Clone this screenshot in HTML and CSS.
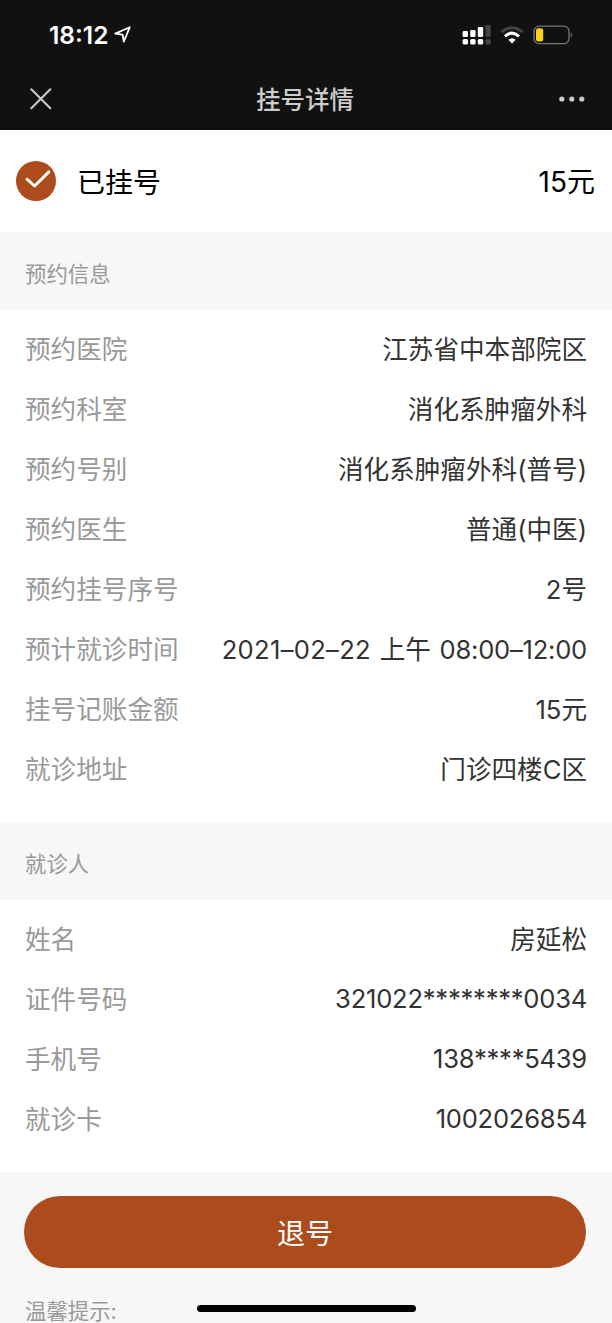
FILE: index.html
```html
<!DOCTYPE html>
<html lang="zh-CN">

<head>
	<meta charset="utf-8">
	<title>挂号详情</title>
	<link rel="stylesheet" href="styles.css">
</head>

<body>
	<header>
		<div class="statusbar">
			<span class="time">18:12</span>
			<svg class="location" width="18" height="18" viewBox="0 0 18 18">
				<path d="M1.2 7.6 L15.8 1.2 L9.8 15.6 L8.6 8.6 Z" />
			</svg>
			<svg class="signal" width="30" height="20" viewBox="0 0 30 20">
				<g fill="#fff">
					<rect x="1.6" y="6" width="5.4" height="6" rx="1.3" />
					<rect x="9.2" y="5" width="5.4" height="7" rx="1.3" />
					<rect x="16.8" y="2" width="5.4" height="10" rx="1.3" />
					<rect x="1.6" y="14" width="5.4" height="5.6" rx="1.6" />
					<rect x="9.2" y="14" width="5.4" height="5.6" rx="1.6" />
					<rect x="16.8" y="14" width="5.4" height="5.6" rx="1.6" />
				</g>
				<g fill="#444">
					<rect x="24.5" y="0" width="5.2" height="12" rx="1.3" />
					<rect x="24.5" y="14" width="5.2" height="5.6" rx="1.6" />
				</g>
			</svg>
			<svg class="wifi" width="24" height="20" viewBox="0 0 24 20">
				<path d="M1.4 7.2 Q12 -1.8 22.6 7.2" stroke="#444" />
				<path d="M5 11.3 Q12 4.9 19 11.3" stroke="#fff" />
				<path d="M12 18.6 L8.4 14.8 Q12 11.8 15.6 14.8 Z" fill="#fff" />
			</svg>
			<svg class="battery" width="40" height="20" viewBox="0 0 40 20">
				<rect x="1" y="1.2" width="35" height="17.4" rx="5" fill="none" stroke="#777" stroke-width="1.3" />
				<rect x="3" y="3.2" width="7.2" height="13.4" rx="2.4" fill="#fcd116" />
				<path d="M37.8 7 Q40.4 9.8 37.8 12.6 Z" fill="#777" />
			</svg>
		</div>
		<div class="navbar">
			<svg class="close" width="22" height="22" viewBox="0 0 22 22">
				<path d="M1.3 1.3 L20.3 20.3 M20.3 1.3 L1.3 20.3" />
			</svg>
			<span class="title">挂号详情</span>
			<svg class="more" width="26" height="6" viewBox="0 0 26 6">
				<circle cx="2.8" cy="3" r="2.6" />
				<circle cx="12.8" cy="3" r="2.6" />
				<circle cx="22.8" cy="3" r="2.6" />
			</svg>
		</div>
	</header>

	<div class="state">
		<svg width="40" height="40" viewBox="0 0 40 40">
			<circle cx="20" cy="20" r="20" fill="#ac4b1b" />
			<path d="M11 18.2 L18.6 25 L32.9 10.9" fill="none" stroke="#fff" stroke-width="2.9" stroke-linecap="round" stroke-linejoin="round" />
		</svg>
		<span class="name">已挂号</span>
		<span class="price">15元</span>
	</div>

	<h2>预约信息</h2>
	<ul>
		<li><label>预约医院</label><span>江苏省中本部院区</span></li>
		<li><label>预约科室</label><span>消化系肿瘤外科</span></li>
		<li><label>预约号别</label><span>消化系肿瘤外科(普号)</span></li>
		<li><label>预约医生</label><span>普通(中医)</span></li>
		<li><label>预约挂号序号</label><span>2号</span></li>
		<li><label>预计就诊时间</label><span class="when"><span class="date">2021–02–22</span> 上午 <span class="num">08:00–12:00</span></span></li>
		<li><label>挂号记账金额</label><span>15元</span></li>
		<li><label>就诊地址</label><span>门诊四楼C区</span></li>
	</ul>

	<h2>就诊人</h2>
	<ul>
		<li><label>姓名</label><span>房延松</span></li>
		<li><label>证件号码</label><span class="num">321022********0034</span></li>
		<li><label>手机号</label><span class="num">138****5439</span></li>
		<li><label>就诊卡</label><span class="num">1002026854</span></li>
	</ul>

	<div class="bottom">
		<button type="button">退号</button>
		<p>温馨提示:</p>
	</div>
	<div class="home"></div>
</body>

</html>
```

FILE: styles.css
```css
* {
	box-sizing: border-box;
}

body {
	margin: 0;
	height: 1323px;
	overflow: hidden;
	background-color: #fff;
	font-family: Inter, "Noto Sans CJK SC", sans-serif;
	font-weight: 370;
	color: #333;
}

header {
	height: 130px;
	background-color: #111;
	color: #fff;
}

.statusbar {
	display: flex;
	align-items: center;
	height: 70px;
	padding: 0 39px 0 49px;
}

.time {
	font-size: 24.5px;
	font-weight: 600;
}

.location {
	margin-left: 6px;
	fill: none;
	stroke: #fff;
	stroke-width: 1.8;
	stroke-linejoin: round;
}

.signal {
	margin-left: auto;
}

.wifi {
	margin: 0 9px;
	fill: none;
	stroke-width: 3;
}

.navbar {
	display: flex;
	align-items: center;
	justify-content: space-between;
	height: 58px;
	padding: 0 27px 0 30px;
}

.close {
	fill: none;
	stroke: #ccc;
	stroke-width: 2;
	stroke-linecap: round;
}

.title {
	padding-bottom: 2px;
	margin-left: -1px;
	font-size: 24.5px;
	font-weight: 500;
	color: #ccc;
}

.more {
	fill: #ccc;
}

.state {
	display: flex;
	align-items: center;
	height: 102px;
	padding: 0 17px 0 16px;
	font-size: 28px;
	color: #000;
}

.name {
	margin-left: 21px;
	padding-bottom: 1px;
}

.price {
	margin-left: auto;
	padding-bottom: 2px;
}

h2 {
	height: 78px;
	margin: 0;
	padding-left: 25px;
	background-color: #f7f7f7;
	font-size: 21.4px;
	line-height: 85px;
	font-weight: 370;
	color: #999;
}

ul {
	list-style: none;
	margin: 0;
	padding: 10px 25px 22px;
}

li {
	display: flex;
	justify-content: space-between;
	height: 60px;
	font-size: 25.6px;
	line-height: 60px;
}

li > .num {
	line-height: 58px;
}

label {
	color: #999;
}

.when {
	word-spacing: 1.5px;
}

.date {
	letter-spacing: 0.3px;
}

.num {
	letter-spacing: -0.25px;
}

.bottom {
	height: 151px;
	padding: 24px 26px 0 24px;
	background-color: #f7f7f7;
}

button {
	display: block;
	width: 100%;
	height: 72px;
	border: none;
	border-radius: 36px;
	background-color: #ac4b1b;
	font-family: inherit;
	font-size: 28px;
	color: #fff;
}

p {
	margin: 28px 0 0 1px;
	font-size: 21.4px;
	line-height: 30px;
	color: #999;
}

.home {
	position: absolute;
	left: 197px;
	top: 1305px;
	width: 219px;
	height: 7px;
	border-radius: 4px;
	background-color: #000;
}
```
